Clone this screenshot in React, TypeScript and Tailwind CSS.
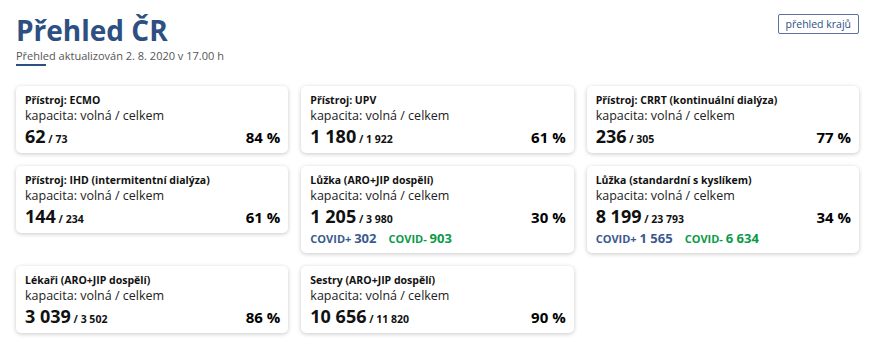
import React from "react";

type Item = {
  title: string;
  free: string;
  total: string;
  pct: string;
  covidPlus?: string;
  covidMinus?: string;
};

const items: Item[] = [
  { title: "Přístroj: ECMO", free: "62", total: "73", pct: "84 %" },
  { title: "Přístroj: UPV", free: "1 180", total: "1 922", pct: "61 %" },
  { title: "Přístroj: CRRT (kontinuální dialýza)", free: "236", total: "305", pct: "77 %" },
  { title: "Přístroj: IHD (intermitentní dialýza)", free: "144", total: "234", pct: "61 %" },
  { title: "Lůžka (ARO+JIP dospělí)", free: "1 205", total: "3 980", pct: "30 %", covidPlus: "302", covidMinus: "903" },
  { title: "Lůžka (standardní s kyslíkem)", free: "8 199", total: "23 793", pct: "34 %", covidPlus: "1 565", covidMinus: "6 634" },
  { title: "Lékaři (ARO+JIP dospělí)", free: "3 039", total: "3 502", pct: "86 %" },
  { title: "Sestry (ARO+JIP dospělí)", free: "10 656", total: "11 820", pct: "90 %" },
];

function CapacityCard({ item }: { item: Item }) {
  return (
    <div className="rounded-[5px] bg-white pl-[9px] pr-[8px] pt-[7px] pb-[5px] shadow-[0_1px_4px_rgba(0,0,0,0.22)]">
      <div className="text-[10.5px] font-bold leading-[15px] text-[#111]">{item.title}</div>
      <div className="text-[12.5px] leading-[15px] text-[#222]">kapacita: volná / celkem</div>
      <div className="mt-[1px] flex h-[24px] items-baseline justify-between leading-[24px]">
        <div className="text-[#111]">
          <span className="text-[18px] font-bold">{item.free}</span>
          <span className="text-[10.5px] font-bold"> / {item.total}</span>
        </div>
        <span className="text-[15px] font-bold">{item.pct}</span>
      </div>
      {item.covidPlus && (
        <div className="mb-[1px] flex h-[19px] items-baseline gap-[12px] font-bold leading-[19px]">
          <span className="text-[#3a5a8f]">
            <span className="text-[11px]">COVID+ </span>
            <span className="text-[13px]">{item.covidPlus}</span>
          </span>
          <span className="text-[#0b9a48]">
            <span className="text-[11px]">COVID- </span>
            <span className="text-[13px]">{item.covidMinus}</span>
          </span>
        </div>
      )}
    </div>
  );
}

export default function App() {
  return (
    <div className="min-h-screen bg-white pl-4 pr-5 pt-[12px] font-['Open_Sans',sans-serif]">
      <div className="flex items-start justify-between">
        <div>
          <h1 className="text-[28px] font-bold leading-[36px] text-[#2d4f81]">Přehled ČR</h1>
          <p className="relative text-[11px] leading-[16px] text-[#555]">
            Přehled aktualizován 2. 8. 2020 v 17.00 h
            <span className="absolute left-0 top-[16px] h-[2px] w-[30px] bg-[#2d4f81]" />
          </p>
        </div>
        <button className="mt-[2px] h-[20px] rounded-[2px] border border-[#5b72a0] px-[7px] text-[10.5px] leading-[18px] text-[#2d4f81]">
          přehled krajů
        </button>
      </div>
      <div className="mt-[22px] grid grid-cols-3 items-start gap-x-[13px] gap-y-[13px]">
        {items.map((it) => (
          <CapacityCard key={it.title} item={it} />
        ))}
      </div>
    </div>
  );
}
